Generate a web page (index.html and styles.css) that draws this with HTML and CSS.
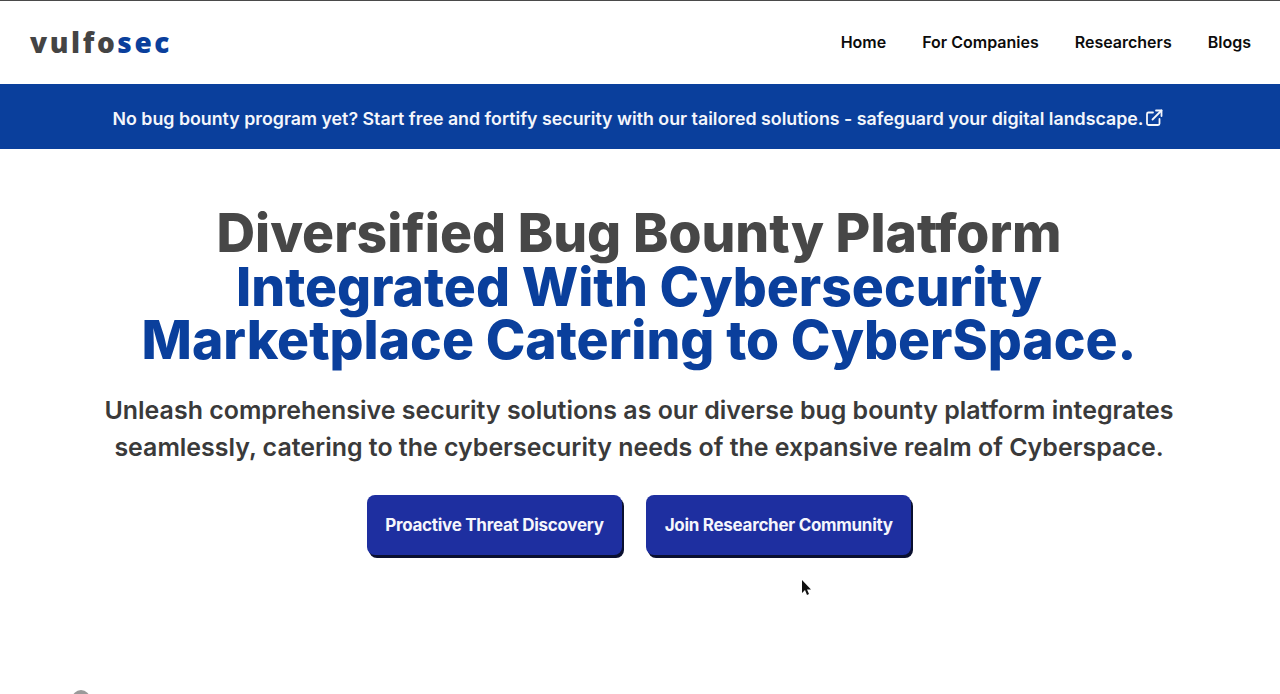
FILE: index.html
```html
<!DOCTYPE html>
<html lang="en">
<head>
<meta charset="utf-8">
<title>vulfosec</title>
<link rel="stylesheet" href="styles.css">
</head>
<body>
<div class="page">
  <header class="nav">
    <a class="logo" href="#">vulfo<span class="logo-accent">sec</span></a>
    <nav class="links">
      <a href="#">Home</a>
      <a href="#">For Companies</a>
      <a href="#">Researchers</a>
      <a href="#">Blogs</a>
    </nav>
  </header>
  <a class="banner" href="#">
    <span>No bug bounty program yet? Start free and fortify security with our tailored solutions - safeguard your digital landscape.</span>
    <svg class="ext" viewBox="0 0 18 18" width="18" height="18" fill="none" stroke="currentColor" stroke-width="1.8" stroke-linecap="round" stroke-linejoin="round">
      <path d="M8 3.500H3.500a1.500 1.500 0 0 0-1.500 1.500v9.500a1.500 1.500 0 0 0 1.500 1.500H13a1.500 1.500 0 0 0 1.500-1.500V10"/>
      <path d="M11 1.500h5.500V7"/>
      <path d="M16.500 1.500 7.500 10.500"/>
    </svg>
  </a>
  <main class="hero">
    <h1 class="title">Diversified Bug Bounty Platform<br><span class="title-accent">Integrated With Cybersecurity<br>Marketplace Catering to CyberSpace.</span></h1>
    <p class="lead">Unleash comprehensive security solutions as our diverse bug bounty platform integrates seamlessly, catering to the cybersecurity needs of the expansive realm of Cyberspace.</p>
    <div class="actions">
      <a class="btn" href="#">Proactive Threat Discovery</a>
      <a class="btn" href="#">Join Researcher Community</a>
    </div>
  </main>
  <svg class="cursor" viewBox="0 0 10 16" width="10" height="16"><path d="M1 0v13l3-3 2 5 2-1-2-4.500h4z" fill="#111"/></svg>
  <span class="peek"></span>
</div>
</body>
</html>
```
FILE: styles.css
```css
* { box-sizing: border-box; }
html, body { margin: 0; height: 100%; background: #fff; overflow: hidden; }
body { font-family: Inter, "Liberation Sans", sans-serif; }
a { text-decoration: none; color: inherit; }
.page { position: relative; height: 694px; overflow: hidden; border-top: 1px solid #4a4a4a; }
.nav { height: 83px; display: flex; align-items: center; justify-content: space-between; padding: 0 29px 2px 30px; }
.logo { font-family: "Open Sans", sans-serif; font-weight: 800; font-size: 28px; letter-spacing: 2.600px; color: #444; line-height: 1; }
.logo-accent { color: #0a3f9c; }
.links { display: flex; gap: 36px; font-size: 16px; font-weight: 600; color: #0c0c0c; }
.banner { height: 65px; padding: 3px 5px 0 0; background: #0a3f9c; color: #f4f6fb; display: flex; align-items: center; justify-content: center; gap: 1px; font-size: 17.800px; font-weight: 600; }
.ext { flex: none; }
.hero { display: flex; flex-direction: column; align-items: center; text-align: center; padding: 57px 2px 0 0; }
.title { margin: 0; font-size: 53.400px; line-height: 53.500px; font-weight: 800; color: #474747; }
.title-accent { color: #0a3f9c; }
.lead { margin: 25.500px 0 0; width: 1100px; font-size: 24.950px; line-height: 37px; font-weight: 600; color: #3a3a3a; }
.actions { display: flex; gap: 24px; margin-top: 29px; }
.btn { display: flex; align-items: center; height: 60px; padding: 0 18.500px; background: #1e2fa0; color: #f5f6fc; border-radius: 8px; box-shadow: 2px 3px 0 #0a1030; font-size: 17px; font-weight: 700; letter-spacing: -0.280px; }
.cursor { position: absolute; left: 801px; top: 579px; }
.peek { position: absolute; left: 72px; top: 689px; width: 18px; height: 18px; border-radius: 50%; background: #9a9a9a; }
```
